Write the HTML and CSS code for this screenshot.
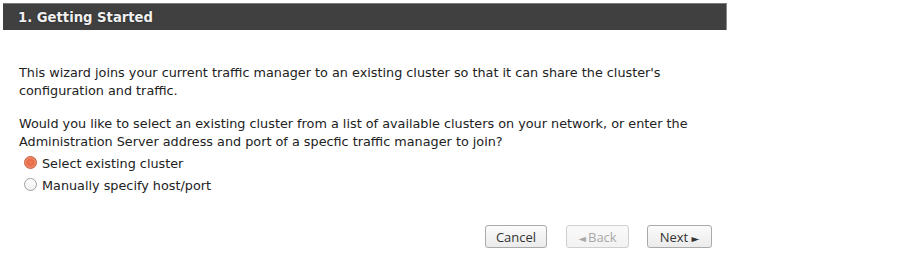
FILE: index.html
```html
<!DOCTYPE html>
<html>
<head>
<meta charset="utf-8">
<link rel="stylesheet" href="styles.css">
</head>
<body>
<div class="wizard">
  <div class="header">1. Getting Started</div>
  <div class="content">
    <p class="para">This wizard joins your current traffic manager to an existing cluster so that it can share the cluster's configuration and traffic.</p>
    <p class="para">Would you like to select an existing cluster from a list of available clusters on your network, or enter the Administration Server address and port of a specfic traffic manager to join?</p>
    <div class="options">
      <label class="option"><span class="radio checked"></span>Select existing cluster</label>
      <label class="option"><span class="radio"></span>Manually specify host/port</label>
    </div>
  </div>
  <div class="buttons">
    <button class="btn btn-cancel">Cancel</button>
    <button class="btn btn-back disabled"><span class="arrow">&#9668;</span>Back</button>
    <button class="btn btn-next">Next <span class="arrow">&#9658;</span></button>
  </div>
</div>
</body>
</html>
```
FILE: styles.css
```css
html, body {
  margin: 0;
  padding: 0;
  background: #ffffff;
}
.wizard {
  width: 724px;
  margin: 3px 0 0 3px;
  font-family: "DejaVu Sans", Verdana, sans-serif;
  font-size: 12.8px;
  color: #222;
}
.header {
  height: 26px;
  line-height: 27px;
  background: #404040;
  border-top: 1px solid #7a7a7a;
  border-right: 1px solid #8a8a8a;
  color: #f0f0f0;
  font-weight: bold;
  font-size: 13.2px;
  padding-left: 15px;
  text-shadow: 0 0 2px rgba(0,0,0,0.6);
}
.content {
  padding: 34px 0 0 16px;
}
.para {
  margin: 0 0 15px 0;
  line-height: 18px;
}
.options {
  margin-top: -14px;
  padding-left: 5px;
}
.option {
  display: flex;
  align-items: center;
  height: 22px;
}
.radio {
  width: 13px;
  height: 13px;
  border-radius: 50%;
  border: 1px solid #a0a0a0;
  background: linear-gradient(#ffffff, #f0f0f0);
  margin-right: 5px;
  box-sizing: border-box;
  position: relative;
  top: -1px;
}
.radio.checked {
  border-color: #c8583a;
  background: radial-gradient(circle at 50% 50%, #f07a55 0, #e86c48 3px, #f19a7c 6px);
}
.buttons {
  display: flex;
  justify-content: flex-end;
  gap: 18px;
  padding-right: 15px;
  margin-top: 29px;
}
.btn {
  font-family: "Open Sans", "DejaVu Sans", sans-serif;
  font-size: 13px;
  color: #333;
  height: 23px;
  padding: 0;
  border: 1px solid #aaa;
  border-radius: 3px;
  background: linear-gradient(#fbfbfb, #ebebeb);
  box-shadow: 0 1px 0 rgba(0,0,0,0.05);
}
.btn-cancel { width: 62px; margin-right: 1px; }
.btn-back { width: 63px; }
.btn-next { width: 65px; }
.btn.disabled {
  color: #a8a8a8;
  border-color: #cfcfcf;
  background: linear-gradient(#fafafa, #f2f2f2);
}
.arrow {
  font-size: 10px;
}
.btn-back .arrow {
  margin-right: 2px;
}
```
